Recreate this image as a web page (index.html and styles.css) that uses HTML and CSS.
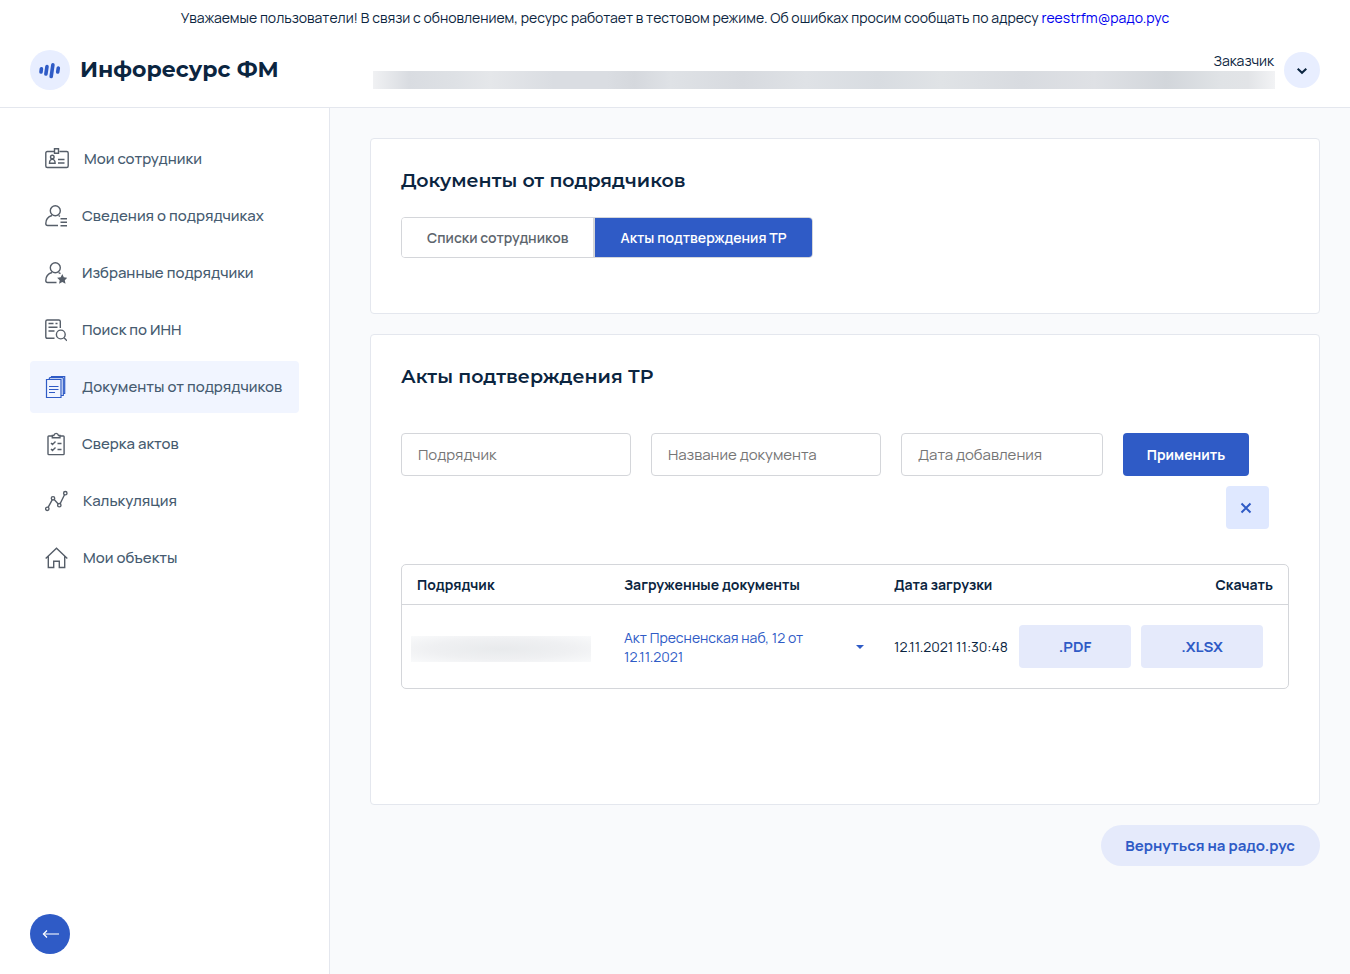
FILE: index.html
```html
<!DOCTYPE html>
<html lang="ru">
<head>
<meta charset="utf-8">
<meta name="viewport" content="width=device-width, initial-scale=1">
<title>Инфоресурс ФМ</title>
<link rel="stylesheet" href="styles.css">
</head>
<body class="page">
<header class="header">
  <p class="notice">Уважаемые пользователи! В связи с обновлением, ресурс работает в тестовом режиме. Об ошибках просим сообщать по адресу <a class="notice-link" href="mailto:reestrfm@радо.рус">reestrfm@радо.рус</a></p>
  <div class="topbar">
    <a class="brand" href="#">
      <span class="brand-mark">
        <svg width="24" height="20" viewBox="0 0 24 20" fill="none" stroke="#2f5bc6" stroke-width="3.600" stroke-linecap="round"><path d="M3.400 8.800 3 12M9 6.500 7.900 14M14.900 4.700 13.200 16.500M20.300 8 19.700 12"/></svg>
      </span>
      <span class="brand-name">Инфоресурс ФМ</span>
    </a>
    <div class="account">
      <div class="account-info">
        <span class="account-role">Заказчик</span>
        <span class="redacted account-name"></span>
      </div>
      <button class="account-toggle" type="button" aria-label="Меню профиля">
        <svg width="12" height="8" viewBox="0 0 12 8" fill="none" stroke="#0b2540" stroke-width="2"><path d="M1.7 1.7 6 5.8l4.3-4.1"/></svg>
      </button>
    </div>
  </div>
</header>
<div class="layout">
  <aside class="sidebar">
    <nav class="nav">
      <a class="nav-item" href="#"><svg class="nav-icon nav-icon-wide" viewBox="0 0 24 24"><path d="M9.500 4.500H2.300Q.8 4.500.8 6v13q0 1.500 1.500 1.500h19.400q1.500 0 1.500-1.500V6q0-1.500-1.500-1.500h-7.200M9.500 1.700h4v4.600h-4zM13 12.500h6.500M13 16h6.500"/><circle cx="7.300" cy="10" r="1.800"/><path d="M4.500 16.300c0-5.200 5.600-5.200 5.600 0z"/></svg>Мои сотрудники</a>
      <a class="nav-item" href="#"><svg class="nav-icon" viewBox="0 0 22 24"><circle cx="10.300" cy="6.800" r="5"/><path d="M7 11.500C3 12.700.8 15.600.8 19.500c0 1.300.6 2 1.800 2H13M13.500 11.500l1.500.8M15.500 14.700H22M15.500 18.200H22M15.500 21.700H22"/></svg>Сведения о подрядчиках</a>
      <a class="nav-item" href="#"><svg class="nav-icon" viewBox="0 0 22 24"><circle cx="10.300" cy="6.800" r="5"/><path d="M7 11.500C3 12.700.8 15.600.8 19.500c0 1.300.6 2 1.800 2H11.500M13.500 11.500l2 1.200"/><path class="solid" d="m17.300 13 1.500 3.200 3.600.5-2.600 2.500.7 3.600-3.200-1.700-3.200 1.700.6-3.600-2.600-2.500 3.600-.5z"/></svg>Избранные подрядчики</a>
      <a class="nav-item" href="#"><svg class="nav-icon" viewBox="0 0 22 24"><path d="M9.500 20.300H2.300Q.8 20.300.8 18.800V3.500Q.8 2 2.300 2h11.500q1.500 0 1.500 1.500V10M3.500 5.500h5M3.500 9.300h9M3.500 13h6M10.500 5.500h2"/><circle cx="15.800" cy="16.500" r="4.400"/><path d="m19 19.700 3 3"/></svg>Поиск по ИНН</a>
      <a class="nav-item nav-item-active" href="#" aria-current="page"><svg class="nav-icon" viewBox="0 0 22 24"><path d="M1.500 4.500h14.500v18H1.500zM4 11.500h9.500M4 14.500h9.500M4 17.500h6"/><path d="M4.300 4.500v-1q0-.8.800-.8M6.500 2.700V1.500h13.200v17h-1.500M5 2.700h12.500q.8 0 .8.800v17H16"/></svg>Документы от подрядчиков</a>
      <a class="nav-item" href="#"><svg class="nav-icon" viewBox="0 0 22 24"><path d="M7 4H3.800q-.8 0-.8.800v17q0 .8.800.8h14.500q.8 0 .8-.8v-17q0-.8-.8-.8H15M7.300 5.800V3.500h1.500C9.500.7 12.800.7 13.500 3.500H15v2.300zM6 11l1.500 1.500 3-3M6 17l1.500 1.500 3-3M12.500 11.500h4M12.500 17.500h4"/></svg>Сверка актов</a>
      <a class="nav-item" href="#"><svg class="nav-icon nav-icon-chart" viewBox="0 0 23 24"><circle cx="2.300" cy="19.800" r="1.700"/><circle cx="8" cy="9.300" r="1.700"/><circle cx="14.300" cy="16.200" r="1.700"/><circle cx="20.300" cy="4.200" r="1.700"/><path d="m3.100 18.300 4.100-7.500M9.200 10.600l4 4.300M15.100 14.700l4.400-9"/></svg>Калькуляция</a>
      <a class="nav-item" href="#"><svg class="nav-icon nav-icon-chart" viewBox="0 0 23 24"><path d="M.7 12.500 11.500 2.200l10.800 10.300M3.300 10.500v11h5.400v-6.300h5.600v6.300h5.400v-11"/></svg>Мои объекты</a>
    </nav>
    <button class="collapse" type="button" aria-label="Свернуть меню">
      <svg width="18" height="10" viewBox="0 0 18 10" fill="none" stroke="#ffffff"><path d="M1.500 5H17" stroke-width="1.500" opacity=".7"/><path d="M5 1.500 1.500 5 5 8.500" stroke-width="1.300"/></svg>
    </button>
  </aside>
  <main class="content">
    <section class="card card-tabs">
      <h1 class="card-title">Документы от подрядчиков</h1>
      <div class="tabs">
        <button class="tab" type="button">Списки сотрудников</button>
        <button class="tab tab-active" type="button">Акты подтверждения ТР</button>
      </div>
    </section>
    <section class="card card-acts">
      <h2 class="card-title">Акты подтверждения ТР</h2>
      <form class="filters" id="filters">
        <input class="field" type="text" aria-label="Подрядчик" placeholder="Подрядчик">
        <input class="field" type="text" aria-label="Название документа" placeholder="Название документа">
        <input class="field field-date" type="text" aria-label="Дата добавления" placeholder="Дата добавления">
        <button class="apply" type="button">Применить</button>
      </form>
      <div class="reset-row">
        <button class="reset" type="reset" form="filters" aria-label="Сбросить"><svg width="12" height="12" viewBox="0 0 12 12" stroke="#2f5bc6" stroke-width="2"><path d="m1.500 1.500 9 9M10.500 1.500l-9 9"/></svg></button>
      </div>
      <div class="table-frame">
        <table class="acts">
          <colgroup><col class="col-contractor"><col class="col-docs"><col class="col-date"><col class="col-download"></colgroup>
          <thead>
            <tr><th>Подрядчик</th><th>Загруженные документы</th><th>Дата загрузки</th><th class="last">Скачать</th></tr>
          </thead>
          <tbody>
            <tr>
              <td class="cell-contractor"><span class="redacted contractor-name"></span></td>
              <td><div class="doc"><a class="doc-link" href="#">Акт Пресненская наб, 12 от 12.11.2021</a><button class="doc-toggle" type="button" aria-label="Показать документы"><svg width="8" height="4" viewBox="0 0 8 4" fill="#2f5bc6"><path d="M0 0h8L4 4z"/></svg></button></div></td>
              <td class="cell-date">12.11.2021 11:30:48</td>
              <td class="cell-download"><div class="downloads"><button class="download" type="button">.PDF</button><button class="download download-xlsx" type="button">.XLSX</button></div></td>
            </tr>
          </tbody>
        </table>
      </div>
    </section>
    <a class="return" href="#">Вернуться на радо.рус</a>
  </main>
</div>
</body>
</html>
```
FILE: styles.css
```css
* { box-sizing: border-box; }

.page {
  margin: 0;
  min-height: 100vh;
  display: flex;
  flex-direction: column;
  background: #ffffff;
  color: #0b2540;
  font-family: Manrope, Inter, "Open Sans", sans-serif;
  font-size: 14px;
  line-height: 19px;
}

button, input { font: inherit; }
button { border: 0; padding: 0; cursor: pointer; }
a { text-decoration: none; }

.header { border-bottom: 1px solid #e4e7ee; }
.notice { margin: 0; padding: 8px 20px 5px; text-align: center; }
.notice-link { color: #0000ee; }

.topbar {
  display: flex;
  justify-content: space-between;
  align-items: center;
  height: 75px;
  padding: 0 30px;
}
.brand { display: flex; align-items: center; gap: 10px; color: inherit; }
.brand-mark {
  display: flex;
  align-items: center;
  justify-content: center;
  width: 40px;
  height: 40px;
  border-radius: 50%;
  background: #e8eeff;
}
.brand-name { font-family: Montserrat, Inter, sans-serif; font-size: 22px; line-height: 30px; font-weight: 700; }

.account { display: flex; align-items: center; gap: 9px; flex: 1; margin-left: 94px; }
.account-info { display: flex; flex-direction: column; flex: 1; align-items: flex-end; gap: 1px; }
.account-role { padding-right: 1px; }
.redacted { display: block; }
.account-name {
  width: 100%;
  height: 18px;
  background: linear-gradient(90deg, #f0f1f3, #d9dce1 4%, #dee1e5 9%, #e5e7ea 13%, #dadde2 20%, #dadde2 26%, #d5d8dd 29%, #dfe2e6 33%, #d7dadf 41%, #dfe2e6 48%, #d8dce1 56%, #e0e3e6 63%, #d8dbe0 72%, #dfe1e5 80%, #d2d6db 88%, #e0e3e6 94%, #e2e4e7 97%, #f2f3f5);
}
.account-toggle {
  display: flex;
  align-items: center;
  justify-content: center;
  width: 36px;
  height: 36px;
  padding-top: 2px;
  border-radius: 50%;
  background: #e8eeff;
}

.layout { display: flex; flex: 1; }
.sidebar {
  display: flex;
  flex-direction: column;
  justify-content: space-between;
  flex: 0 0 330px;
  padding: 25px 30px 20px;
  border-right: 1px solid #e4e7ee;
}
.nav { display: flex; flex-direction: column; gap: 5px; }
.nav-item {
  display: flex;
  align-items: center;
  gap: 15px;
  height: 52px;
  padding: 0 15px 2px;
  border-radius: 4px;
  color: #465b70;
  font-size: 15px;
  font-weight: 500;
  white-space: nowrap;
}
.nav-item-active { background: #f1f5ff; }
.nav-icon { width: 22px; height: 24px; margin-top: 2px; flex: none; fill: none; stroke: #565e69; stroke-width: 1.4; }
.nav-icon-wide { width: 24px; }
.nav-icon-chart { width: 23px; }
.nav-item-active .nav-icon { stroke: #2f5bc6; stroke-width: 1.2; }
.nav-icon .solid { fill: #565e69; stroke: none; }
.collapse {
  display: flex;
  align-items: center;
  justify-content: center;
  width: 40px;
  height: 40px;
  padding-left: 2px;
  border-radius: 50%;
  background: #2f5bc6;
}

.content {
  display: flex;
  flex-direction: column;
  gap: 20px;
  flex: 1;
  min-width: 0;
  padding: 30px 30px 30px 40px;
  background: #f9fafc;
}
.card { padding: 29px; padding-left: 30px; background: #ffffff; border: 1px solid #e4e7ee; border-radius: 4px; }
.card-tabs { padding-bottom: 55px; }
.card-acts { padding-bottom: 115px; }
.card-title { margin: 0; font-family: Montserrat, Inter, sans-serif; font-size: 19px; line-height: 25px; font-weight: 600; }

.tabs { display: inline-flex; margin-top: 24px; border: 1px solid #d4d6da; border-radius: 4px; overflow: hidden; }
.tab { height: 39px; padding: 0 25px; background: #ffffff; color: #5d656d; font-size: 14px; font-weight: 600; }
.tab-active { border-left: 2px solid #d4d6da; background: #2f5bc6; color: #ffffff; font-weight: 600; }

.filters { display: grid; grid-template-columns: 230fr 230fr 202fr 126px; gap: 20px; margin-top: 44px; margin-right: 41px; }
.field {
  width: 100%;
  min-width: 0;
  height: 43px;
  padding: 0 16px;
  border: 1px solid #d4d6da;
  border-radius: 4px;
  background: #ffffff;
  color: #0b2540;
  font-size: 15px;
}
.field::placeholder { color: #757575; opacity: 1; }
.apply { height: 43px; border-radius: 4px; background: #2f5bc6; color: #ffffff; font-weight: 700; }
.reset-row { display: flex; justify-content: flex-end; margin: 10px 21px 35px 0; }
.reset { display: flex; align-items: center; justify-content: center; width: 43px; height: 43px; padding-right: 3px; border-radius: 4px; background: #dfe8ff; }

.table-frame { margin-right: 1px; border: 1px solid #d4d6da; border-radius: 5px; }
.acts { width: 100%; border-collapse: separate; border-spacing: 0; table-layout: fixed; }
.col-contractor { width: 207px; }
.col-download { width: 271px; }
.col-date { width: 138px; }
.acts th { height: 40px; padding: 0 15px; border-bottom: 1px solid #d4d6da; text-align: left; font-size: 14px; font-weight: 700; white-space: nowrap; }
.acts .last { text-align: right; }
.acts td { height: 83px; padding: 0 0 0 15px; }
.acts .cell-contractor { padding: 5px 0 0 9px; }
.contractor-name { width: 180px; height: 26px; background: radial-gradient(ellipse at center, #e8eaec 0%, #eff0f2 55%, #f9fafb 100%); }
.doc { display: flex; align-items: center; justify-content: space-between; gap: 10px; padding-right: 5px; }
.doc-link { max-width: 190px; color: #2f5bc6; }
.doc-toggle { display: flex; align-items: center; justify-content: center; width: 28px; height: 28px; background: transparent; }
.acts .cell-date { white-space: nowrap; }
.acts .cell-download { padding: 0 25px 0 0; }
.downloads { display: flex; justify-content: flex-end; gap: 10px; }
.download { width: 112px; height: 43px; border-radius: 4px; background: #e5eafb; color: #2f5bc6; font-size: 15px; font-weight: 700; }
.download-xlsx { width: 122px; }

.return {
  align-self: flex-end;
  padding: 11px 25px 11px 24px;
  border-radius: 21px;
  background: #e5eafb;
  color: #2f5bc6;
  font-size: 15px;
  font-weight: 700;
}
```
